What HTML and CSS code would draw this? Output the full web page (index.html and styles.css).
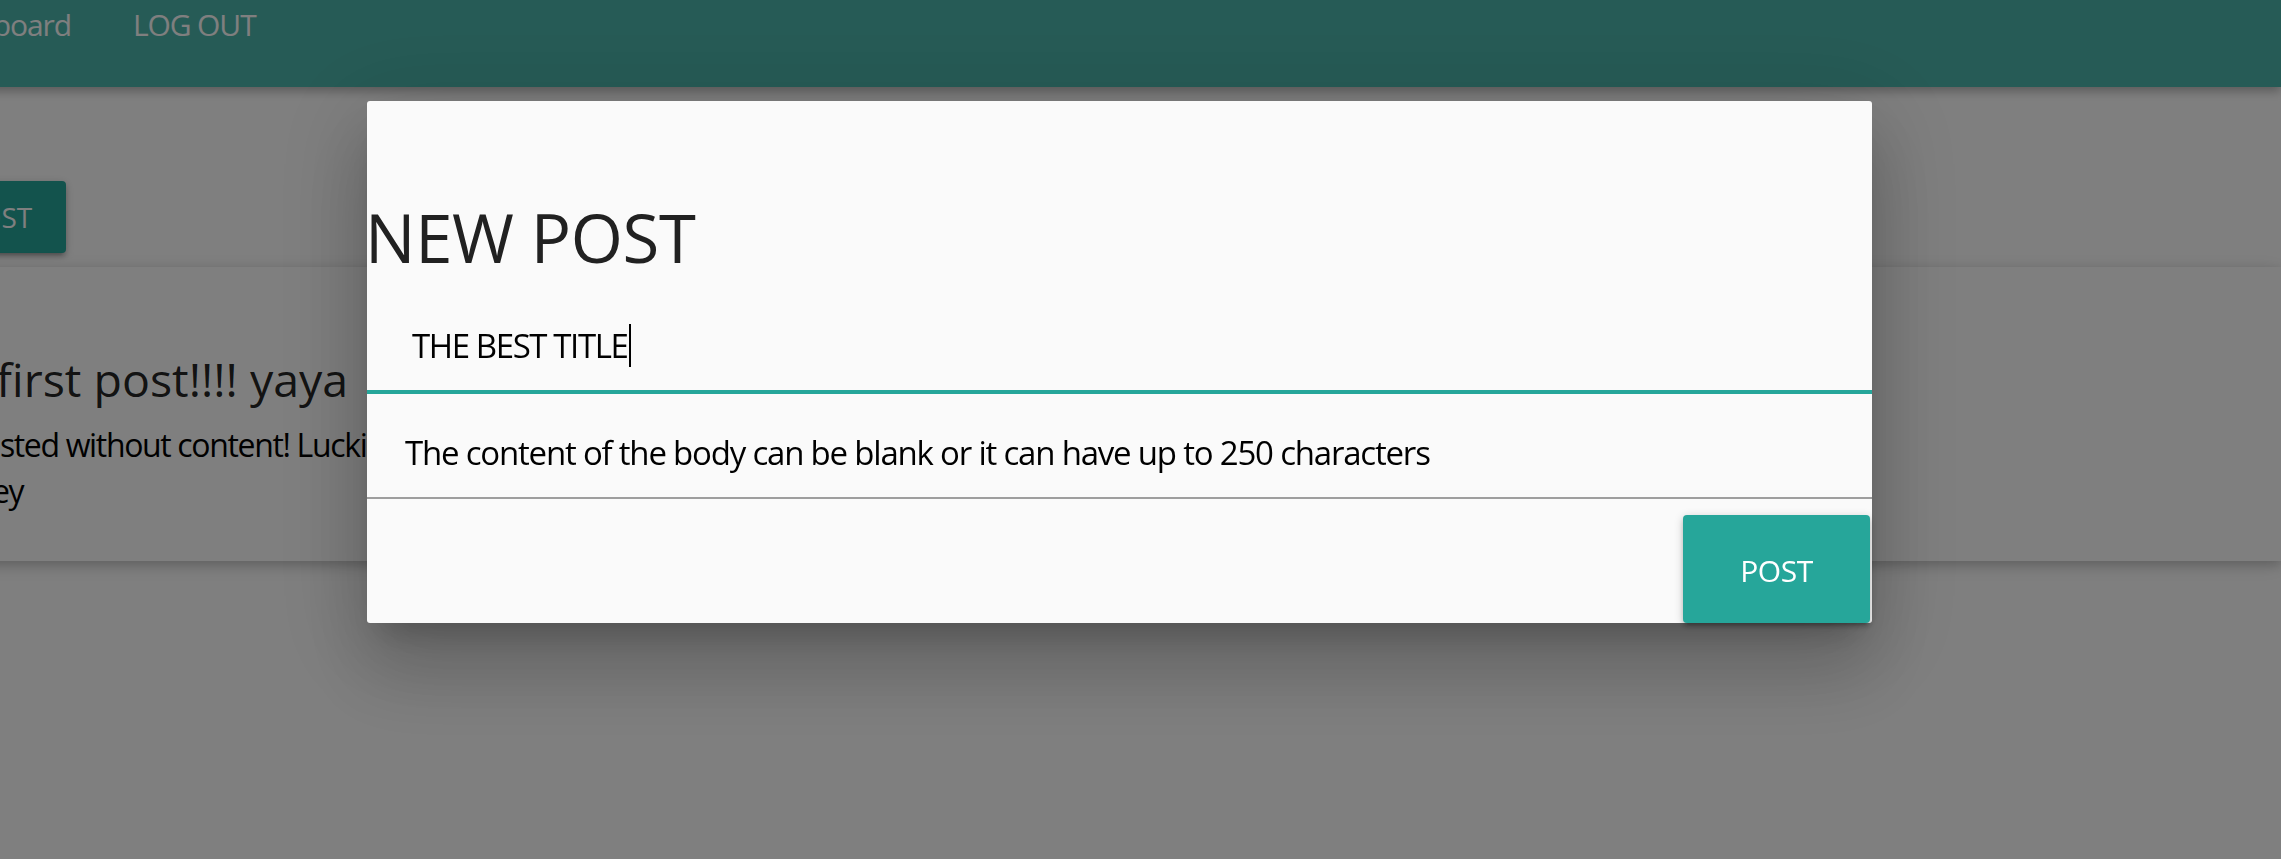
FILE: index.html
```html
<!DOCTYPE html>
<html lang="en">
<head>
<meta charset="utf-8">
<title>New post</title>
<link rel="stylesheet" href="styles.css">
</head>
<body>
<div class="page">
  <nav class="nav">
    <ul class="nav-links">
      <li><a href="#">Dashboard</a></li>
      <li><a href="#">LOG OUT</a></li>
    </ul>
  </nav>
  <main class="main">
    <button class="new-btn" type="button">NEW POST</button>
    <article class="card">
      <h2 class="card-title">The first post!!!! yaya</h2>
      <p class="card-text">We posted without content! Luckily<br>monkey</p>
    </article>
  </main>
</div>
<div class="overlay"></div>
<div class="modal">
  <h4 class="modal-title">NEW POST</h4>
  <div class="field field-title"><span class="field-text">THE BEST TITLE</span><span class="caret"></span></div>
  <div class="field field-body"><span class="field-text">The content of the body can be blank or it can have up to 250 characters</span></div>
  <div class="modal-footer">
    <button class="post-btn" type="button">POST</button>
  </div>
</div>
</body>
</html>
```
FILE: styles.css
```css
* { box-sizing: border-box; }
html, body { margin: 0; padding: 0; }
body {
  width: 2281px;
  height: 859px;
  overflow: hidden;
  background: #ffffff;
  font-family: "Open Sans", "Noto Sans", sans-serif;
  color: rgba(0,0,0,0.87);
}
.page { margin-left: -160px; }
.nav {
  height: 87px;
  background: #4db6ac;
  box-shadow: 0 4px 10px rgba(0,0,0,0.3);
}
.nav-links {
  list-style: none;
  margin: 0;
  padding: 1px 0 0 55px;
  display: flex;
}
.nav-links a {
  display: block;
  padding: 0 31px;
  color: #fff;
  text-decoration: none;
  font-size: 30px;
  line-height: 47px;
  letter-spacing: -1.1px;
}
.main { display: flex; flex-direction: column; align-items: flex-start; }
.new-btn {
  margin: 94px 0 0 19px;
  height: 72px;
  padding: 0 34px;
  border: none;
  border-radius: 4px;
  background: #26a69a;
  color: #fff;
  font-family: inherit;
  font-size: 28px;
  line-height: 72px;
  box-shadow: 0 4px 4px rgba(0,0,0,0.14), 0 6px 2px -4px rgba(0,0,0,0.12), 0 2px 10px rgba(0,0,0,0.2);
}
.card {
  align-self: stretch;
  margin-top: 14px;
  height: 294px;
  background: #fff;
  padding: 80px 48px 0 72px;
  box-shadow: 0 4px 10px rgba(0,0,0,0.16), 0 4px 20px rgba(0,0,0,0.12);
}
.card-title {
  margin: 0;
  text-indent: -8px;
  font-weight: 400;
  font-size: 46.5px;
  line-height: 64px;
}
.card-text {
  margin: 11px 0 0;
  font-size: 32px;
  line-height: 46px;
  letter-spacing: -1.35px;
  color: #000;
}
.overlay {
  position: fixed;
  inset: 0;
  background: rgba(0,0,0,0.5);
}
.modal {
  position: fixed;
  left: 367px;
  top: 101px;
  width: 1505px;
  height: 522px;
  background: #fafafa;
  border-radius: 3px;
  display: flex;
  flex-direction: column;
  box-shadow: 0 48px 76px 6px rgba(0,0,0,0.14), 0 18px 92px 16px rgba(0,0,0,0.12), 0 22px 30px -14px rgba(0,0,0,0.2);
}
.modal-title {
  margin: 96px 0 0 -2px;
  font-weight: 400;
  font-size: 67px;
  line-height: 80px;
  letter-spacing: -0.3px;
  color: #212121;
}
.field { display: flex; align-items: flex-end; color: #000; }
.field-title {
  height: 117px;
  padding: 0 0 21px 45px;
  border-bottom: 4px solid #26a69a;
  font-size: 33px;
  line-height: 47px;
  letter-spacing: -1.4px;
}
.caret {
  display: inline-block;
  width: 2px;
  height: 43px;
  background: #000;
  margin: 0 0 2px 2px;
}
.field-body {
  height: 105px;
  padding: 0 0 21px 38px;
  border-bottom: 2px solid #9e9e9e;
  font-size: 33px;
  line-height: 47px;
  letter-spacing: -1.2px;
}
.modal-footer {
  flex: 1;
  display: flex;
  justify-content: flex-end;
  align-items: flex-end;
  padding-right: 2px;
}
.post-btn {
  width: 187px;
  height: 108px;
  padding: 3px 0 0;
  border: none;
  border-radius: 4px;
  background: #26a69a;
  color: #fff;
  font-family: inherit;
  font-size: 30px;
  letter-spacing: -0.5px;
  box-shadow: 0 4px 4px rgba(0,0,0,0.14), 0 6px 2px -4px rgba(0,0,0,0.12), 0 2px 10px rgba(0,0,0,0.2);
}
```
